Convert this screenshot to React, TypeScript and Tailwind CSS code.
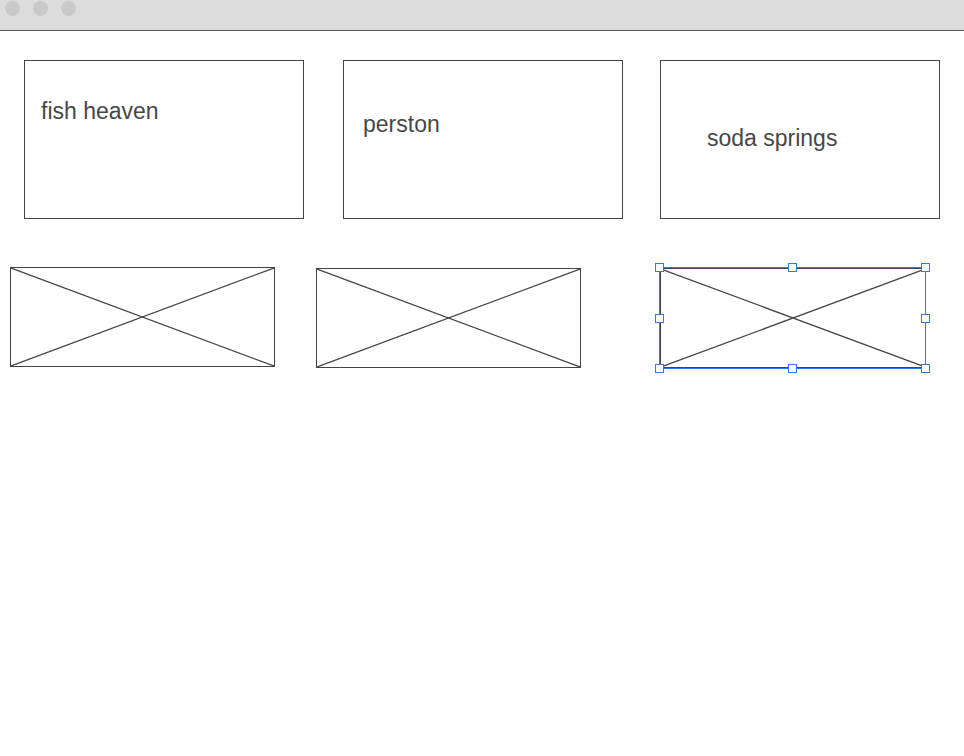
import React from "react";

const font = { fontFamily: '"Liberation Sans", Arial, sans-serif' };

function Card({ label, className }: { label: string; className: string }) {
  return (
    <div className="w-[280px] h-[159px] border border-[#444444] shrink-0 bg-white">
      <div className={`text-[23px] leading-[26px] text-[#474747] ${className}`}>{label}</div>
    </div>
  );
}

function XBox({ className = "" }: { className?: string }) {
  return (
    <div className={`border border-[#444444] bg-white shrink-0 ${className}`}>
      <svg className="block w-full h-full" viewBox="0 0 100 100" preserveAspectRatio="none">
        <line x1="0" y1="0" x2="100" y2="100" stroke="#444444" strokeWidth="1.2" vectorEffect="non-scaling-stroke" />
        <line x1="100" y1="0" x2="0" y2="100" stroke="#444444" strokeWidth="1.2" vectorEffect="non-scaling-stroke" />
      </svg>
    </div>
  );
}

function Handle() {
  return <div className="w-[9px] h-[9px] bg-white border border-[#3478e8]" />;
}

function HandleRow({ middle = true }: { middle?: boolean }) {
  return (
    <div className="flex justify-between">
      <Handle />
      {middle && <Handle />}
      <Handle />
    </div>
  );
}

export default function App() {
  return (
    <div className="w-[964px] h-[756px] bg-white overflow-hidden" style={font}>
      <div className="h-[31px] bg-[#dcdcdc] border-b border-[#555555] flex items-start pl-[5px] pt-[1px] gap-[13px]">
        <div className="w-[15px] h-[15px] rounded-full bg-[#c9c9c9]" />
        <div className="w-[15px] h-[15px] rounded-full bg-[#c9c9c9]" />
        <div className="w-[15px] h-[15px] rounded-full bg-[#c9c9c9]" />
      </div>

      <div className="flex items-start pl-[24px] mt-[29px]">
        <Card label="fish heaven" className="pt-[37px] pl-[16px]" />
        <div className="ml-[39px]">
          <Card label="perston" className="pt-[50px] pl-[19px]" />
        </div>
        <div className="ml-[37px]">
          <Card label="soda springs" className="pt-[64px] pl-[46px]" />
        </div>
      </div>

      <div className="flex items-start pl-[10px] mt-[48px]">
        <XBox className="w-[265px] h-[100px]" />
        <XBox className="w-[265px] h-[100px] ml-[41px] mt-[1px]" />
        <div className="relative ml-[79px] mt-[1px]">
          <XBox className="w-[266px] h-[100px]" />
          <div className="absolute -left-px -top-px w-[267px] h-[102px] border border-[#3478e8] pointer-events-none" />
          <div className="absolute -left-[5px] -top-[5px] w-[275px] h-[110px] flex flex-col justify-between pointer-events-none">
            <HandleRow />
            <HandleRow middle={false} />
            <HandleRow />
          </div>
        </div>
      </div>
    </div>
  );
}
